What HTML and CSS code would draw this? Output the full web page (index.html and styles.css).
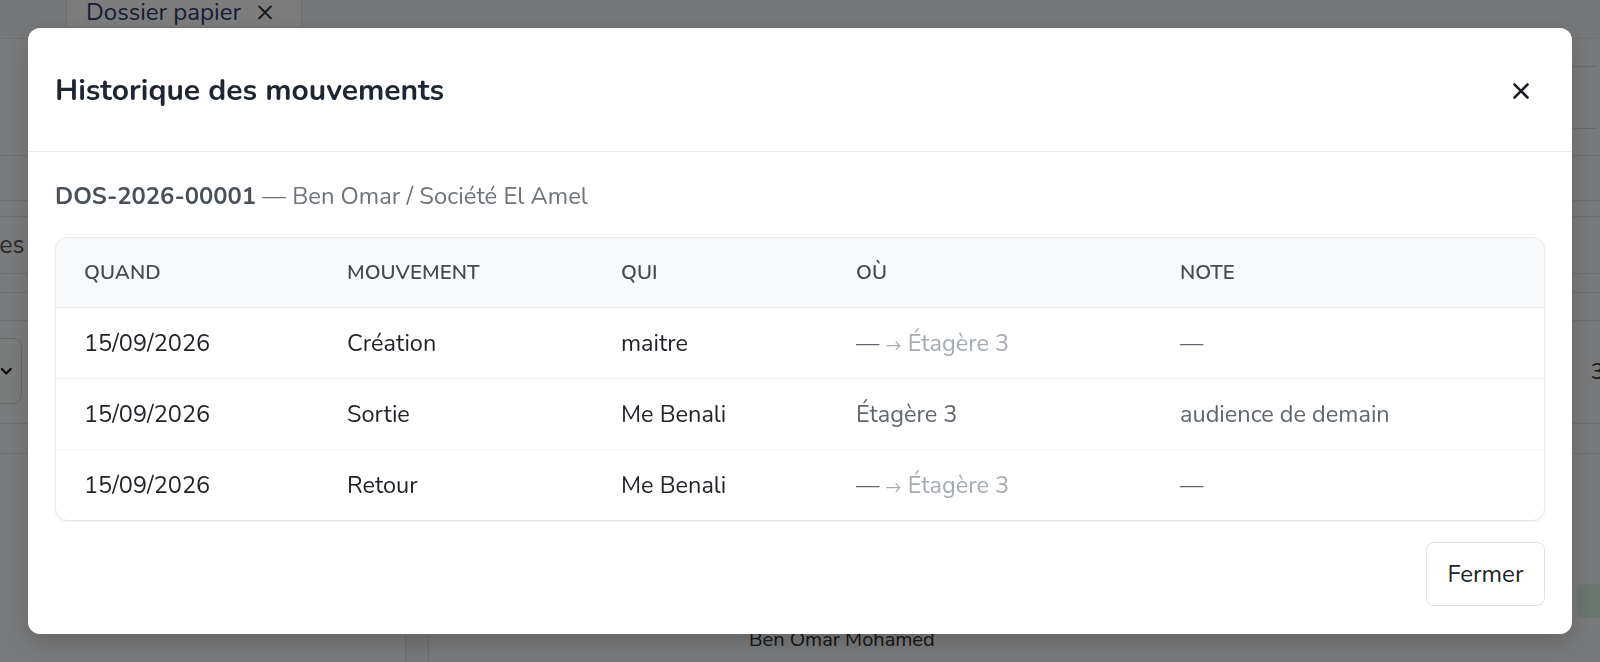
FILE: index.html
```html
<!DOCTYPE html>
<html lang="fr">
<head>
<meta charset="utf-8">
<title>Dossier papier</title>
<link rel="stylesheet" href="styles.css">
</head>
<body>
<div class="app">
  <div class="topbar">
    <div class="tab">
      <span class="tab-label">Dossier papier</span>
      <span class="tab-close">×</span>
    </div>
  </div>
  <div class="workspace">
    <aside class="sidebar">
      <div class="row r-head"></div>
      <div class="row r-a"></div>
      <div class="row r-b"></div>
      <div class="row r-c side-label"><span>Archives</span></div>
      <div class="row r-d"></div>
      <div class="row r-e"></div>
      <div class="row r-f side-select">
        <div class="select"><span>Tous</span><svg width="18" height="18" viewBox="0 0 18 18"><path d="M3.5 6.5l5.5 5.5 5.5-5.5" fill="none" stroke="#111" stroke-width="2.6" stroke-linecap="round" stroke-linejoin="round"/></svg></div>
      </div>
      <div class="row r-g"></div>
      <div class="row r-h"></div>
    </aside>
    <div class="gutter"></div>
    <main class="content">
      <div class="row r-head content-head">
        <div class="head-btn"></div>
      </div>
      <div class="row r-a"></div>
      <div class="row r-b"></div>
      <div class="row r-c"></div>
      <div class="row r-d"></div>
      <div class="row r-e"></div>
      <div class="row r-f count-row"><span class="count">3</span></div>
      <div class="row r-g"></div>
      <div class="row r-h"></div>
      <div class="foot">
        <span class="status"></span>
        <span class="holder">Ben Omar Mohamed</span>
      </div>
    </main>
  </div>
</div>

<div class="backdrop">
  <section class="modal" role="dialog" aria-labelledby="mv-title">
    <header class="modal-header">
      <h2 id="mv-title" class="modal-title">Historique des mouvements</h2>
      <button class="btn-close" aria-label="Fermer">
        <svg width="18" height="18" viewBox="0 0 18 18"><path d="M2.5 2.5l13 13M15.5 2.5l-13 13" stroke="#1a1f2b" stroke-width="2.6" stroke-linecap="round"/></svg>
      </button>
    </header>
    <div class="modal-body">
      <p class="dossier-ref"><strong>DOS-2026-00001</strong> — Ben Omar / Société El Amel</p>
      <div class="table-card">
        <table class="mv-table">
          <colgroup>
            <col class="c-when"><col class="c-move"><col class="c-who"><col class="c-where"><col class="c-note">
          </colgroup>
          <thead>
            <tr><th>Quand</th><th>Mouvement</th><th>Qui</th><th>Où</th><th>Note</th></tr>
          </thead>
          <tbody>
            <tr>
              <td>15/09/2026</td><td>Création</td><td>maitre</td>
              <td class="muted">— <span class="faint"><span class="arrow">→</span> Étagère 3</span></td>
              <td class="muted">—</td>
            </tr>
            <tr>
              <td>15/09/2026</td><td>Sortie</td><td>Me Benali</td>
              <td class="muted">Étagère 3</td>
              <td class="muted">audience de demain</td>
            </tr>
            <tr>
              <td>15/09/2026</td><td>Retour</td><td>Me Benali</td>
              <td class="muted">— <span class="faint"><span class="arrow">→</span> Étagère 3</span></td>
              <td class="muted">—</td>
            </tr>
          </tbody>
        </table>
      </div>
    </div>
    <footer class="modal-footer">
      <button class="btn-secondary">Fermer</button>
    </footer>
  </section>
</div>
</body>
</html>
```

FILE: styles.css
```css
* { box-sizing: border-box; }

html, body {
  margin: 0;
  height: 100%;
}

body {
  font-family: "Nunito", "Lato", "Noto Sans", sans-serif;
  color: #212529;
  background: #eef0f2;
  overflow: hidden;
}

/* ---------- underlying app ---------- */
.app {
  height: 100vh;
  display: flex;
  flex-direction: column;
}

.topbar {
  height: 39px;
  flex: none;
  border-bottom: 1px solid #dfe2e6;
  background: #eceef0;
  display: flex;
  padding-left: 66px;
}

.tab {
  width: 236px;
  background: #fafafa;
  border-left: 1px solid #dcdfe3;
  border-right: 1px solid #dcdfe3;
  display: flex;
  align-items: center;
  align-self: flex-start;
  height: 26px;
  gap: 15px;
  padding: 0 0 2px 19px;
  color: #2b3a6b;
  font-size: 24px;
  line-height: 24px;
}

.tab-close {
  font-size: 30px;
  line-height: 24px;
  color: #333;
}

.workspace {
  flex: 1;
  display: flex;
}

.sidebar {
  width: 406px;
  border-right: 1px solid #d6d9dd;
  background: #f3f4f6;
}

.row {
  border-bottom: 1px solid #d9dce0;
}

/* shared row heights, sidebar and content line up */
.r-head { height: 117px; }
.r-a { height: 45px; }
.r-b { height: 16px; }
.r-c { height: 57px; }
.r-d { height: 19px; }
.r-e { height: 28px; }
.r-f { height: 103px; }
.r-g { height: 30px; }
.r-h { height: 100px; border-bottom: none; }

.side-label {
  display: flex;
  align-items: center;
  margin-left: -72px;
  font-size: 25px;
  color: #555;
}

.side-select {
  padding-top: 17px;
  margin-left: -62px;
}

.select {
  width: 84px;
  height: 66px;
  border: 1px solid #c9cdd2;
  border-radius: 9px;
  background: #f5f6f7;
  display: flex;
  align-items: center;
  justify-content: flex-end;
  gap: 18px;
  padding-right: 7px;
  font-size: 20px;
}

.gutter {
  width: 23px;
  border-right: 1px solid #d6d9dd;
  background: #eceef0;
}

.content {
  flex: 1;
  background: #f1f2f4;
  display: flex;
  flex-direction: column;
}

.content-head {
  display: flex;
  justify-content: flex-end;
  padding-top: 27px;
}

.head-btn {
  height: 63px;
  width: 30px;
  margin-right: 3px;
  border: 1px solid #cfd3d8;
  border-right: none;
  border-radius: 8px 0 0 8px;
}

.count-row {
  display: flex;
  align-items: center;
  justify-content: flex-end;
}

.count {
  font-size: 22px;
  color: #333;
  margin-right: -4px;
}

.foot {
  flex: 1;
  position: relative;
  display: flex;
  align-items: flex-end;
  padding: 0 0 10px 320px;
}

.holder {
  font-size: 20px;
  line-height: 24px;
  color: #2a2d31;
}

.status {
  position: absolute;
  right: 0;
  top: 30px;
  width: 23px;
  height: 34px;
  border-radius: 6px 0 0 6px;
  background: #d6ece1;
}

/* ---------- modal ---------- */
.backdrop {
  position: fixed;
  inset: 0;
  background: rgba(0, 0, 0, 0.5);
  display: flex;
  justify-content: center;
  align-items: flex-start;
  padding-top: 28px;
}

.modal {
  width: 1544px;
  height: 606px;
  background: #fff;
  border-radius: 12px;
  box-shadow: 0 8px 24px rgba(0, 0, 0, 0.18);
  display: flex;
  flex-direction: column;
}

.modal-header {
  height: 124px;
  flex: none;
  display: flex;
  align-items: center;
  justify-content: space-between;
  padding: 2px 42px 0 27px;
  border-bottom: 1px solid #e3e6ea;
}

.modal-title {
  margin: 0;
  font-size: 30px;
  font-weight: 700;
  color: #1f2633;
}

.btn-close {
  border: 0;
  background: none;
  padding: 0;
  width: 18px;
  height: 18px;
  display: flex;
  cursor: pointer;
}

.modal-body {
  padding: 29px 27px 0 27px;
}

.dossier-ref {
  margin: 0 0 26px;
  font-size: 23.8px;
  line-height: 30px;
  color: #6c737b;
}

.dossier-ref strong {
  color: #4a5058;
  font-weight: 700;
}

.table-card {
  border: 1px solid #e3e6ea;
  border-radius: 12px;
  overflow: hidden;
  box-shadow: 0 1px 2px rgba(0, 0, 0, 0.05);
}

.mv-table {
  width: 100%;
  border-collapse: collapse;
  table-layout: fixed;
  font-size: 23.5px;
}

.c-when  { width: 263px; }
.c-move  { width: 274px; }
.c-who   { width: 235px; }
.c-where { width: 324px; }

.mv-table th {
  height: 69px;
  background: #f8f9fa;
  text-align: left;
  font-size: 20.5px;
  font-weight: 600;
  text-transform: uppercase;
  color: #454b54;
  padding: 0 0 0 28px;
  border-bottom: 1px solid #e3e6ea;
}

.mv-table td {
  height: 71px;
  padding: 0 0 0 28px;
  color: #212529;
  border-bottom: 1px solid #eef0f2;
}

.mv-table tbody tr:last-child td {
  border-bottom: none;
}

.mv-table td.muted { color: #5f666e; }

.faint { color: #a6acb3; }

.arrow {
  font-size: 16px;
  vertical-align: 0;
}

.modal-footer {
  margin-top: auto;
  display: flex;
  justify-content: flex-end;
  padding: 0 27px 28px;
}

.btn-secondary {
  width: 119px;
  height: 64px;
  border: 1px solid #dee2e6;
  border-radius: 8px;
  background: #fff;
  font-family: inherit;
  font-size: 24px;
  color: #212529;
  cursor: pointer;
}
```
